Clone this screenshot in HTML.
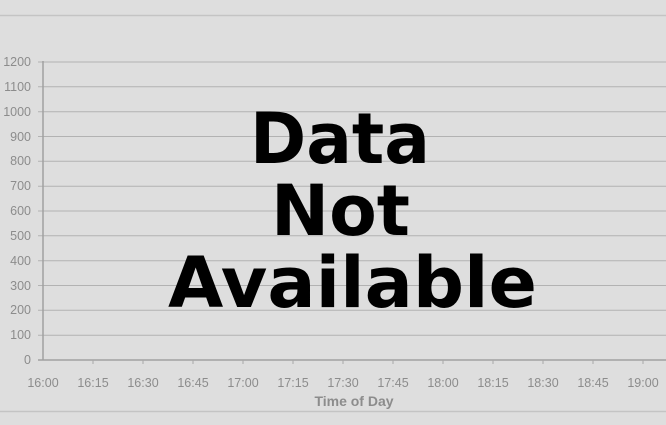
<!DOCTYPE html><html><head><style>html,body{margin:0;background:#dedede;overflow:hidden;width:666px;height:425px}svg{display:block}</style></head><body>
<svg width="666" height="425" xmlns="http://www.w3.org/2000/svg" font-family="Liberation Sans, sans-serif">
<rect width="666" height="425" fill="#dedede"/>
<line x1="0" y1="15.5" x2="666" y2="15.5" stroke="#c4c4c4" stroke-width="1.5"/>
<line x1="0" y1="411.5" x2="666" y2="411.5" stroke="#c4c4c4" stroke-width="1.5"/>
<g stroke="#b2b2b2" stroke-width="1">
<line x1="38" y1="62" x2="666" y2="62"/><line x1="38" y1="86.8" x2="666" y2="86.8"/><line x1="38" y1="111.7" x2="666" y2="111.7"/><line x1="38" y1="136.5" x2="666" y2="136.5"/><line x1="38" y1="161.3" x2="666" y2="161.3"/><line x1="38" y1="186.2" x2="666" y2="186.2"/><line x1="38" y1="211" x2="666" y2="211"/><line x1="38" y1="235.8" x2="666" y2="235.8"/><line x1="38" y1="260.7" x2="666" y2="260.7"/><line x1="38" y1="285.5" x2="666" y2="285.5"/><line x1="38" y1="310.3" x2="666" y2="310.3"/><line x1="38" y1="335.2" x2="666" y2="335.2"/>
</g>
<g stroke="#a0a0a0" stroke-width="1.5"><line x1="43" y1="61" x2="43" y2="360"/><line x1="38" y1="360" x2="666" y2="360"/></g>
<g stroke="#a8a8a8"><line x1="93" y1="360" x2="93" y2="364"/><line x1="143" y1="360" x2="143" y2="364"/><line x1="193" y1="360" x2="193" y2="364"/><line x1="243" y1="360" x2="243" y2="364"/><line x1="293" y1="360" x2="293" y2="364"/><line x1="343" y1="360" x2="343" y2="364"/><line x1="393" y1="360" x2="393" y2="364"/><line x1="443" y1="360" x2="443" y2="364"/><line x1="493" y1="360" x2="493" y2="364"/><line x1="543" y1="360" x2="543" y2="364"/><line x1="593" y1="360" x2="593" y2="364"/><line x1="643" y1="360" x2="643" y2="364"/></g>
<g fill="#8c8c8c" font-size="12.5" text-anchor="end">
<text x="31" y="66">1200</text><text x="31" y="91">1100</text><text x="31" y="116">1000</text><text x="31" y="141">900</text><text x="31" y="165">800</text><text x="31" y="190">700</text><text x="31" y="215">600</text><text x="31" y="240">500</text><text x="31" y="265">400</text><text x="31" y="290">300</text><text x="31" y="314">200</text><text x="31" y="339">100</text><text x="31" y="364">0</text>
</g>
<g fill="#8c8c8c" font-size="12.5" text-anchor="middle">
<text x="43" y="387">16:00</text><text x="93" y="387">16:15</text><text x="143" y="387">16:30</text><text x="193" y="387">16:45</text><text x="243" y="387">17:00</text><text x="293" y="387">17:15</text><text x="343" y="387">17:30</text><text x="393" y="387">17:45</text><text x="443" y="387">18:00</text><text x="493" y="387">18:15</text><text x="543" y="387">18:30</text><text x="593" y="387">18:45</text><text x="643" y="387">19:00</text>
<text x="354" y="406" font-weight="bold" font-size="14">Time of Day</text>
</g>
<g font-family="DejaVu Sans, sans-serif" font-weight="bold" font-size="70" fill="#000">
<text x="250" y="163" textLength="180" lengthAdjust="spacingAndGlyphs">Data</text>
<text x="271" y="235" textLength="139" lengthAdjust="spacingAndGlyphs">Not</text>
<text x="168" y="307" textLength="369" lengthAdjust="spacingAndGlyphs">Available</text>
</g>
</svg>
</body></html>
